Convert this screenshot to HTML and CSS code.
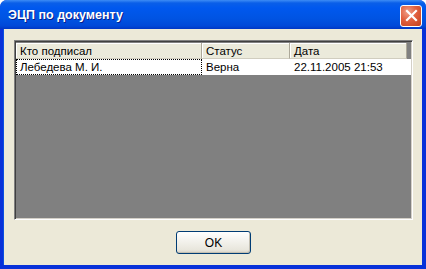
FILE: index.html
```html
<!DOCTYPE html>
<html lang="ru">
<head>
    <meta charset="UTF-8">
    <title>ЭЦП по документу</title>
    <link rel="stylesheet" href="styles.css">
</head>
<body>
    <div class="window">
        <div class="titlebar">
            <span class="title">ЭЦП по документу</span>
            <div class="close">
                <svg width="13" height="13" viewBox="0 0 13 13">
                    <path d="M2 2 L11 11 M11 2 L2 11" stroke="#fff" stroke-width="2.2" stroke-linecap="square"/>
                </svg>
            </div>
        </div>
        <div class="client">
            <div class="listview">
                <div class="header">
                    <div class="col c1">Кто подписал</div>
                    <div class="col c2">Статус</div>
                    <div class="col c3">Дата</div>
                </div>
                <div class="row">
                    <div class="cell c1 focus">Лебедева М. И.</div>
                    <div class="cell c2">Верна</div>
                    <div class="cell c3">22.11.2005 21:53</div>
                </div>
            </div>
            <div class="buttons">
                <button class="btn">OK</button>
            </div>
        </div>
    </div>
</body>
</html>
```

FILE: styles.css
```css
body { margin: 0; background: #fff; font-family: "Liberation Sans", Arial, sans-serif; font-size: 11.5px; }
.window { width: 426px; height: 269px; display: flex; flex-direction: column; background: #0831d9; border-radius: 7px 7px 0 0; box-sizing: border-box; }
.titlebar { height: 29px; flex: none; display: flex; align-items: center; justify-content: space-between; padding: 0 4px 0 8px; border-radius: 7px 7px 0 0;
    background: linear-gradient(#3d8cf5 0px, #0a5fe8 3px, #0058ee 8px, #0054e3 18px, #0048d8 26px, #0036c4 29px); }
.title { color: #fff; font-weight: bold; font-size: 12.5px; text-shadow: 1px 1px 0 #0a1e8a; margin-top: 1px; }
.close { width: 20px; height: 20px; border: 1px solid #fff; border-radius: 3px; display: flex; align-items: center; justify-content: center;
    background: radial-gradient(circle at 35% 30%, #f0a08a, #e1603f 45%, #c2401d); margin-top: 2px; }
.client { flex: 1; margin: 0 4px 4px 3px; background: #ece9d8; padding: 11px 9px 11px 10px; display: flex; flex-direction: column; border-left: 1px solid #0a4fe0; }
.listview { height: 180px; box-sizing: border-box; background: #808080; border: 1px solid; border-color: #808080 #fff #fff #808080; box-shadow: inset 1px 1px 0 #404040, inset -1px -1px 0 #d4d0c8; padding: 2px 1px 1px 1px; }
.header, .row { display: flex; }
.c1 { width: 186px; }
.c2 { width: 88px; }
.c3 { width: 117px; }
.col { height: 16px; line-height: 16px; padding-left: 4px; box-sizing: border-box; background: #ebeadb; border-right: 1px solid #aca899; border-bottom: 1px solid #d0cdbf; box-shadow: inset 1px 1px 0 #fff; color: #000; }
.row { background: #fff; }
.cell { height: 16px; line-height: 16px; padding-left: 4px; box-sizing: border-box; color: #000; }
.focus { outline: 1px dotted #000; outline-offset: -1px; }
.buttons { flex: 1; display: flex; justify-content: center; align-items: flex-end; }
.btn { width: 75px; height: 23px; font-family: "Liberation Sans", Arial, sans-serif; font-size: 12px; color: #000; border: 1px solid #003c74; border-radius: 3px;
    background: linear-gradient(#fff, #f4f3ee 40%, #e8e6dc 85%, #d6d0c5); box-shadow: inset -1px -1px 0 #c3bfb2; padding: 0; }
```
